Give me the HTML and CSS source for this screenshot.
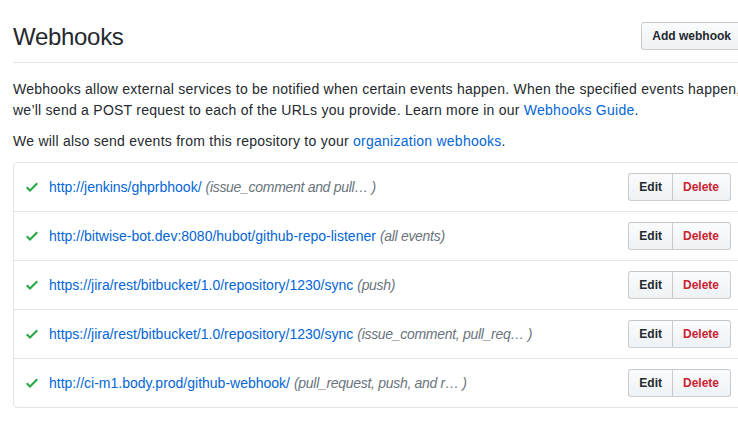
FILE: index.html
```html
<!DOCTYPE html>
<html lang="en">
<head>
<meta charset="utf-8">
<title>Webhooks</title>
<link rel="stylesheet" href="styles.css">
</head>
<body>
<div class="page">
  <div class="subhead">
    <h2 class="subhead-heading">Webhooks</h2>
    <button class="btn btn-sm btn-add">Add webhook</button>
  </div>
  <p>Webhooks allow external services to be notified when certain events happen. When the specified events happen, we’ll send a POST request to each of the URLs you provide. Learn more in our <a href="#">Webhooks Guide</a>.</p>
  <p>We will also send events from this repository to your <a href="#">organization webhooks</a>.</p>
  <div class="box">
    <div class="box-row">
      <div class="hook">
        <svg class="check" width="12" height="16" viewBox="0 0 12 16"><path fill-rule="evenodd" d="M12 5l-8 8-4-4 1.5-1.5L4 10l6.5-6.5L12 5z"/></svg>
        <a href="#" class="hook-url">http://jenkins/ghprbhook/</a>
        <span class="hook-events">(issue_comment and pull… )</span>
      </div>
      <div class="btn-group"><button class="btn btn-sm">Edit</button><button class="btn btn-sm btn-danger">Delete</button></div>
    </div>
    <div class="box-row">
      <div class="hook">
        <svg class="check" width="12" height="16" viewBox="0 0 12 16"><path fill-rule="evenodd" d="M12 5l-8 8-4-4 1.5-1.5L4 10l6.5-6.5L12 5z"/></svg>
        <a href="#" class="hook-url">http://bitwise-bot.dev:8080/hubot/github-repo-listener</a>
        <span class="hook-events">(all events)</span>
      </div>
      <div class="btn-group"><button class="btn btn-sm">Edit</button><button class="btn btn-sm btn-danger">Delete</button></div>
    </div>
    <div class="box-row">
      <div class="hook">
        <svg class="check" width="12" height="16" viewBox="0 0 12 16"><path fill-rule="evenodd" d="M12 5l-8 8-4-4 1.5-1.5L4 10l6.5-6.5L12 5z"/></svg>
        <a href="#" class="hook-url">https://jira/rest/bitbucket/1.0/repository/1230/sync</a>
        <span class="hook-events">(push)</span>
      </div>
      <div class="btn-group"><button class="btn btn-sm">Edit</button><button class="btn btn-sm btn-danger">Delete</button></div>
    </div>
    <div class="box-row">
      <div class="hook">
        <svg class="check" width="12" height="16" viewBox="0 0 12 16"><path fill-rule="evenodd" d="M12 5l-8 8-4-4 1.5-1.5L4 10l6.5-6.5L12 5z"/></svg>
        <a href="#" class="hook-url">https://jira/rest/bitbucket/1.0/repository/1230/sync</a>
        <span class="hook-events">(issue_comment, pull_req… )</span>
      </div>
      <div class="btn-group"><button class="btn btn-sm">Edit</button><button class="btn btn-sm btn-danger">Delete</button></div>
    </div>
    <div class="box-row">
      <div class="hook">
        <svg class="check" width="12" height="16" viewBox="0 0 12 16"><path fill-rule="evenodd" d="M12 5l-8 8-4-4 1.5-1.5L4 10l6.5-6.5L12 5z"/></svg>
        <a href="#" class="hook-url">http://ci-m1.body.prod/github-webhook/</a>
        <span class="hook-events">(pull_request, push, and r… )</span>
      </div>
      <div class="btn-group"><button class="btn btn-sm">Edit</button><button class="btn btn-sm btn-danger">Delete</button></div>
    </div>
  </div>
</div>
</body>
</html>
```

FILE: styles.css
```css
html, body {
  margin: 0;
  padding: 0;
  overflow: hidden;
  background: #ffffff;
}

body {
  font-family: "Liberation Sans", Arial, sans-serif;
  font-size: 14px;
  line-height: 21px;
  color: #24292e;
}

.page {
  width: 735px;
  margin-left: 13px;
  padding-top: 22px;
}

a {
  color: #0366d6;
  text-decoration: none;
}

.subhead {
  display: flex;
  align-items: flex-start;
  justify-content: space-between;
  padding-bottom: 10px;
  border-bottom: 1px solid #e1e4e8;
  margin-bottom: 16px;
}

.subhead-heading {
  margin: 0;
  font-size: 24px;
  line-height: 30px;
  font-weight: 400;
  letter-spacing: -0.3px;
}

p {
  margin: 0 0 10px 0;
  letter-spacing: 0.25px;
}

.btn {
  font-family: "Liberation Sans", Arial, sans-serif;
  font-weight: 700;
  color: #24292e;
  background-color: #eff3f6;
  background-image: linear-gradient(-180deg, #fafbfc 0%, #eff3f6 90%);
  border: 1px solid rgba(27, 31, 35, 0.2);
  border-radius: 3px;
  cursor: pointer;
  white-space: nowrap;
}

.btn-sm {
  font-size: 12px;
  line-height: 20px;
  padding: 3px 10px;
}

.btn-add {
  margin-right: 6px;
}

.btn-danger {
  color: #cb2431;
}

.btn-group {
  display: flex;
  flex-shrink: 0;
}

.btn-group .btn {
  border-radius: 0;
}

.btn-group .btn:first-child {
  border-radius: 3px 0 0 3px;
}

.btn-group .btn:last-child {
  border-left: 0;
  border-radius: 0 3px 3px 0;
  padding-right: 11px;
}

.box {
  margin-top: 10px;
  border: 1px solid #e1e4e8;
  border-radius: 4px;
}

.box-row {
  display: flex;
  align-items: center;
  justify-content: space-between;
  padding: 10px 16px 10px 12px;
  border-top: 1px solid #e1e4e8;
}

.box-row:first-child {
  border-top: 0;
}

.hook {
  display: flex;
  align-items: center;
  white-space: nowrap;
}

.check {
  fill: #28a745;
  margin-right: 11px;
  flex-shrink: 0;
}

.hook-events {
  margin-left: 4px;
  font-style: italic;
  color: #6a737d;
  letter-spacing: -0.3px;
}
```
